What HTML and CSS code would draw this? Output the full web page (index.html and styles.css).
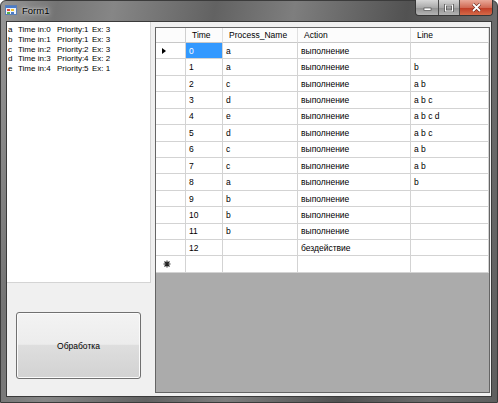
FILE: index.html
```html
<!DOCTYPE html>
<html>
<head>
<meta charset="utf-8">
<link rel="stylesheet" href="styles.css">
</head>
<body>
<div class="window">
  <div class="titlebar">
    <svg class="appicon" width="12" height="12" viewBox="0 0 12 12">
      <rect x="0.5" y="1.5" width="11" height="9" fill="#eef3fa" stroke="#5b7fb5"/>
      <rect x="1" y="2" width="10" height="2" fill="#4a7cc9"/>
      <rect x="2" y="5" width="3" height="2" fill="#e3463a"/>
      <rect x="6" y="5" width="3" height="2" fill="#f2c230"/>
      <rect x="2" y="8" width="3" height="2" fill="#5bb04a"/>
      <rect x="6" y="8" width="3" height="2" fill="#4a7cc9"/>
    </svg>
    <span class="title">Form1</span>
    <div class="controls">
      <div class="ctl ctl-min">
        <svg width="9" height="6" viewBox="0 0 9 6"><rect x="1" y="3" width="7" height="2.5" fill="#fff" stroke="#3a3a3a" stroke-width="0.6"/></svg>
      </div>
      <div class="ctl ctl-max">
        <svg width="10" height="8" viewBox="0 0 10 8"><rect x="1.5" y="1" width="7" height="6" fill="none" stroke="#3a3a3a" stroke-width="2.4"/><rect x="1.5" y="1" width="7" height="6" fill="none" stroke="#fff" stroke-width="1.2"/></svg>
      </div>
      <div class="ctl ctl-close">
        <svg width="11" height="9" viewBox="0 0 11 9"><path d="M2 1 L9 8 M9 1 L2 8" stroke="#5a1a10" stroke-width="3"/><path d="M2 1 L9 8 M9 1 L2 8" stroke="#fff" stroke-width="1.8"/></svg>
      </div>
    </div>
  </div>
  <div class="client">
    <div class="leftcol">
      <div class="listbox">
        <div class="item"><span class="c1">a</span><span class="c2">Time in:0</span><span class="c3">Priority:1</span><span>Ex: 3</span></div>
        <div class="item"><span class="c1">b</span><span class="c2">Time in:1</span><span class="c3">Priority:1</span><span>Ex: 3</span></div>
        <div class="item"><span class="c1">c</span><span class="c2">Time in:2</span><span class="c3">Priority:2</span><span>Ex: 3</span></div>
        <div class="item"><span class="c1">d</span><span class="c2">Time in:3</span><span class="c3">Priority:4</span><span>Ex: 2</span></div>
        <div class="item"><span class="c1">e</span><span class="c2">Time in:4</span><span class="c3">Priority:5</span><span>Ex: 1</span></div>
      </div>
      <button class="btn">Обработка</button>
    </div>
    <div class="grid">
      <div class="row header">
        <div class="cell hcell"></div>
        <div class="cell hcell">Time</div>
        <div class="cell hcell">Process_Name</div>
        <div class="cell hcell">Action</div>
        <div class="cell hcell">Line</div>
      </div>
      <div class="row"><div class="cell rh"><span class="arrow"></span></div><div class="cell sel">0</div><div class="cell">a</div><div class="cell">выполнение</div><div class="cell"></div></div>
      <div class="row"><div class="cell rh"></div><div class="cell">1</div><div class="cell">a</div><div class="cell">выполнение</div><div class="cell">b</div></div>
      <div class="row"><div class="cell rh"></div><div class="cell">2</div><div class="cell">c</div><div class="cell">выполнение</div><div class="cell">a b</div></div>
      <div class="row"><div class="cell rh"></div><div class="cell">3</div><div class="cell">d</div><div class="cell">выполнение</div><div class="cell">a b c</div></div>
      <div class="row"><div class="cell rh"></div><div class="cell">4</div><div class="cell">e</div><div class="cell">выполнение</div><div class="cell">a b c d</div></div>
      <div class="row"><div class="cell rh"></div><div class="cell">5</div><div class="cell">d</div><div class="cell">выполнение</div><div class="cell">a b c</div></div>
      <div class="row"><div class="cell rh"></div><div class="cell">6</div><div class="cell">c</div><div class="cell">выполнение</div><div class="cell">a b</div></div>
      <div class="row"><div class="cell rh"></div><div class="cell">7</div><div class="cell">c</div><div class="cell">выполнение</div><div class="cell">a b</div></div>
      <div class="row"><div class="cell rh"></div><div class="cell">8</div><div class="cell">a</div><div class="cell">выполнение</div><div class="cell">b</div></div>
      <div class="row"><div class="cell rh"></div><div class="cell">9</div><div class="cell">b</div><div class="cell">выполнение</div><div class="cell"></div></div>
      <div class="row"><div class="cell rh"></div><div class="cell">10</div><div class="cell">b</div><div class="cell">выполнение</div><div class="cell"></div></div>
      <div class="row"><div class="cell rh"></div><div class="cell">11</div><div class="cell">b</div><div class="cell">выполнение</div><div class="cell"></div></div>
      <div class="row"><div class="cell rh"></div><div class="cell">12</div><div class="cell"></div><div class="cell">бездействие</div><div class="cell"></div></div>
      <div class="row"><div class="cell rh">
        <svg class="star" width="8" height="8" viewBox="0 0 8 8"><path d="M4 0.5 V7.5 M0.5 4 H7.5 M1.5 1.5 L6.5 6.5 M6.5 1.5 L1.5 6.5" stroke="#222" stroke-width="1.1"/></svg>
      </div><div class="cell"></div><div class="cell"></div><div class="cell"></div><div class="cell"></div></div>
    </div>
  </div>
</div>
</body>
</html>
```

FILE: styles.css
```css
html, body {
  margin: 0;
  padding: 0;
  overflow: hidden;
  background: #ffffff;
}

.window {
  width: 498px;
  height: 403px;
  box-sizing: border-box;
  border: 1px solid #3b3b3b;
  border-radius: 6px 6px 0 0;
  display: flex;
  flex-direction: column;
  background: linear-gradient(100deg, #989898 0%, #747474 10%, #868686 20%, #626262 38%, #7e7e7e 52%, #525252 72%, #6c6c6c 88%, #5e5e5e 100%);
  font-family: "Liberation Sans", Arial, sans-serif;
}

.titlebar {
  height: 20px;
  flex: none;
  display: flex;
  align-items: flex-start;
  padding-left: 4px;
}

.appicon {
  margin-top: 3px;
  flex: none;
}

.title {
  margin-left: 5px;
  margin-top: 4px;
  font-size: 9.5px;
  color: #000;
  text-shadow: 0 0 5px rgba(255, 255, 255, 0.9), 0 0 2px rgba(255, 255, 255, 0.7);
}

.controls {
  margin-left: auto;
  margin-right: 4px;
  display: flex;
  height: 15px;
  margin-top: -1px;
  border: 1px solid #363636;
  border-top: none;
  border-radius: 0 0 4px 4px;
  overflow: hidden;
}

.ctl {
  display: flex;
  align-items: center;
  justify-content: center;
}

.ctl-min {
  width: 22px;
  background: linear-gradient(#d6d6d6, #aaaaaa 50%, #909090 51%, #b4b4b4);
  border-right: 1px solid #4a4a4a;
}

.ctl-max {
  width: 20px;
  background: linear-gradient(#d6d6d6, #aaaaaa 50%, #909090 51%, #b4b4b4);
  border-right: 1px solid #4a4a4a;
}

.ctl-close {
  width: 32px;
  background: linear-gradient(#e9a999, #d16a55 50%, #bf3a24 51%, #d56a48);
}

.client {
  flex: 1;
  margin: 0 5px 5px 5px;
  border: 1px solid #3a3a3a;
  background: #f0f0f0;
  display: flex;
  min-height: 0;
}

.leftcol {
  width: 144px;
  flex: none;
  display: flex;
  flex-direction: column;
}

.listbox {
  height: 261px;
  box-sizing: border-box;
  background: #fff;
  border-right: 1px solid #d4d4d4;
  border-bottom: 1px solid #d4d4d4;
  padding: 3px 0 0 1px;
  font-size: 8px;
  color: #000;
}

.item {
  height: 9.75px;
  line-height: 9.75px;
  white-space: nowrap;
  display: flex;
}

.c1 { width: 10px; }
.c2 { width: 39px; }
.c3 { width: 35px; }

.btn {
  margin: 29px 0 0 9px;
  width: 125px;
  height: 67px;
  border: 1px solid #707070;
  border-radius: 3px;
  box-shadow: inset 0 0 0 1px #fbfbfb;
  background: linear-gradient(#f3f3f3 0%, #ececec 48%, #dedede 50%, #d2d2d2 100%);
  font-family: "Liberation Sans", Arial, sans-serif;
  font-size: 8.5px;
  color: #000;
  padding: 0;
}

.grid {
  margin: 5px 0 0 4px;
  width: 335px;
  height: 366px;
  box-sizing: border-box;
  border: 1px solid #656565;
  background: #ababab;
  font-size: 8.5px;
  color: #000;
}

.row {
  display: grid;
  grid-template-columns: 30px 37px 75px 113px 1fr;
  height: 16.43px;
  background: #fff;
}

.row.header {
  height: 15px;
  background: #fcfcfc;
}

.cell {
  box-sizing: border-box;
  border-right: 1px solid #d3d3d3;
  border-bottom: 1px solid #d3d3d3;
  padding-left: 3px;
  display: flex;
  align-items: center;
  white-space: nowrap;
  overflow: hidden;
}

.hcell {
  padding-left: 6px;
  border-right: 1px solid #e0e0e0;
  border-bottom: 1px solid #c8c8c8;
}

.header .hcell:first-child {
  border-right: 1px solid #cfcfcf;
}

.rh {
  padding-left: 6px;
}

.sel {
  background: #3399ff;
  color: #fff;
}

.arrow {
  width: 0;
  height: 0;
  border-left: 4px solid #000;
  border-top: 3.5px solid transparent;
  border-bottom: 3.5px solid transparent;
}

.star {
  margin-left: 1px;
}
```
